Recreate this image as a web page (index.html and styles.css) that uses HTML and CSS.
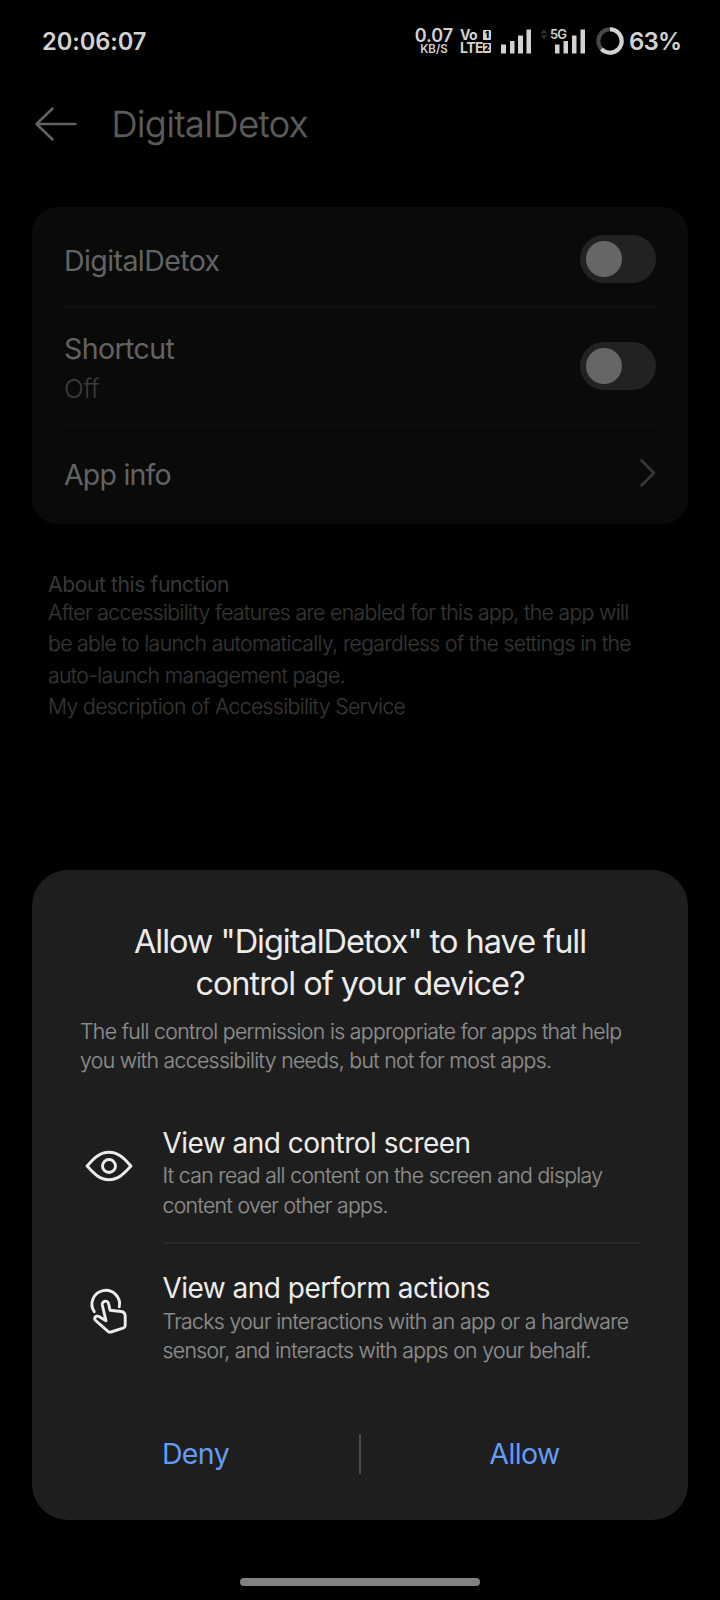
FILE: index.html
```
<!DOCTYPE html>
<html lang="en">
<head>
<meta charset="utf-8">
<title>DigitalDetox</title>
<link rel="stylesheet" href="styles.css">
</head>
<body>
<main class="screen">
  <header class="status">
    <span class="clock">20:06:07</span>
    <div class="indicators">
      <div class="speed"><span class="speed-num">0.07</span><span class="speed-unit">KB/S</span></div>
      <div class="volte">
        <div class="volte-row"><span>Vo</span><b class="sim">1</b></div>
        <div class="volte-row"><span>LTE</span><b class="sim">2</b></div>
      </div>
      <svg class="signal" width="31" height="25" viewBox="0 0 31 25"><path d="M0 15.500h5V24.500H0zM9 12h4.500V24.500H9zM17 6.500h5V24.500h-5zM25.500.5h4.500V24.500h-4.500z"/></svg>
      <div class="signal-5g">
        <svg width="46" height="25" viewBox="0 0 46 25"><path class="faint" d="M4 0l3.500 4.500h-7zM4 10.500L.5 6h7z"/><path d="M15 15.500h4.500V24.500h-4.500zM23.500 12h4.500V24.500h-4.500zM32 6.500h4.500V24.500h-4.500zM40.500.5h4.500V24.500h-4.500z"/></svg>
        <span class="net">5G</span>
      </div>
      <svg class="ring" width="28" height="28" viewBox="0 0 28 28"><circle class="ring-bg" cx="14" cy="14" r="11.700"/><circle class="ring-fg" cx="14" cy="14" r="11.700" pathLength="100" stroke-dasharray="63 37" transform="rotate(-90 14 14)"/></svg>
      <span class="battery">63%</span>
    </div>
  </header>

  <div class="appbar">
    <svg class="back" width="42" height="34" viewBox="0 0 42 34"><path d="M17.500 1.500L1.500 17L17.500 32.500M1.500 17H40.500"/></svg>
    <h1 class="title">DigitalDetox</h1>
  </div>

  <section class="card">
    <div class="row row-main"><span class="label">DigitalDetox</span><span class="toggle"></span></div>
    <div class="row row-shortcut">
      <div class="stack"><span class="label">Shortcut</span><span class="sub">Off</span></div>
      <span class="toggle"></span>
    </div>
    <div class="row row-info"><span class="label">App info</span>
      <svg class="chevron" width="16" height="28" viewBox="0 0 16 28"><path d="M1.500 1.500L14 14L1.500 26.500"/></svg></div>
  </section>

  <section class="about">
    <h2 class="about-title">About this function</h2>
    <p class="about-text">After accessibility features are enabled for this app, the app will<br>be able to launch automatically, regardless of the settings in the<br>auto-launch management page.<br>My description of Accessibility Service</p>
  </section>

  <section class="dialog">
    <h2 class="dialog-title">Allow "DigitalDetox" to have full<br>control of your device?</h2>
    <p class="body-text intro">The full control permission is appropriate for apps that help<br>you with accessibility needs, but not for most apps.</p>
    <div class="perm perm-view">
      <svg class="perm-icon" width="58" height="58" viewBox="0 0 58 58"><path d="M7 29C12 24 18 15.300 29 15.300S46 24 51 29C46 34 40 42.700 29 42.700S12 34 7 29Z"/><circle cx="29" cy="29" r="6.500"/></svg>
      <div class="perm-copy">
        <h3 class="perm-title">View and control screen</h3>
        <p class="body-text">It can read all content on the screen and display<br>content over other apps.</p>
      </div>
    </div>
    <div class="perm perm-act">
      <svg class="perm-icon" width="58" height="58" viewBox="0 0 58 58"><path d="M14.300 29.800A13.800 13.800 0 1 1 39.300 24.800"/><path d="M26 38.800L22.300 23A3.200 3.200 0 0 1 28.600 21.800L30 28.200L41 29.500Q45 30 45.200 34V43.500Q45 45.500 43 46.200L31 50Q29.500 50.500 28 49.300L15.600 38.500C13.500 36 15.500 33.300 18.500 34.300Z"/></svg>
      <div class="perm-copy">
        <h3 class="perm-title">View and perform actions</h3>
        <p class="body-text">Tracks your interactions with an app or a hardware<br>sensor, and interacts with apps on your behalf.</p>
      </div>
    </div>
    <div class="actions"><button class="action">Deny</button><i class="split"></i><button class="action">Allow</button></div>
  </section>
  <div class="homebar"></div>
</main>
</body>
</html>
```
FILE: styles.css
```
* { box-sizing: border-box; margin: 0; padding: 0; }
body { background: #000; font-family: Inter, "Liberation Sans", sans-serif; color: #e8e8e8; }
svg { display: block; flex: none; }
h1, h2, h3 { font-weight: 400; }
.screen { width: 720px; height: 1600px; overflow: hidden; display: flex; flex-direction: column; white-space: nowrap; }

.status { height: 82px; padding: 0 38px 0 42px; display: flex; justify-content: space-between; align-items: center; color: #d2d2d2; font-weight: 600; }
.clock { font-size: 23.700px; line-height: 30px; letter-spacing: -0.1px; padding-top: 1px; }
.indicators { display: flex; align-items: center; }
.speed { display: flex; flex-direction: column; align-items: center; width: 40px; padding-top: 2px; }
.speed-num { font-size: 18px; line-height: 14px; }
.speed-unit { font-size: 11.500px; line-height: 12px; }
.volte { margin-left: 6px; width: 31px; font-size: 14px; line-height: 13px; letter-spacing: -0.5px; font-weight: 700; }
.volte-row { display: flex; justify-content: space-between; align-items: center; }
.sim { background: #d2d2d2; color: #000; font-size: 9px; line-height: 10px; width: 8px; text-align: center; border-radius: 1px; letter-spacing: 0; }
.signal { margin-left: 10px; }
.signal path, .signal-5g path { fill: #d2d2d2; }
.signal-5g { position: relative; margin-left: 8px; }
.signal-5g .faint { fill: #2b2b2b; }
.net { position: absolute; left: 10px; top: -1px; font-size: 13px; line-height: 13px; letter-spacing: -1px; background: #000; }
.ring { margin-left: 10px; }
.ring circle { fill: none; stroke-width: 4; }
.ring-bg { stroke: #484848; }
.ring-fg { stroke: #d2d2d2; }
.battery { margin-left: 5px; width: 53px; font-size: 24px; line-height: 30px; letter-spacing: -0.8px; padding-top: 2px; }

.appbar { height: 84px; padding-left: 35px; display: flex; align-items: center; gap: 34.500px; }
.back path, .chevron path { fill: none; stroke: #626262; stroke-width: 2.500; stroke-linecap: round; stroke-linejoin: round; }
.title { font-size: 36px; line-height: 44px; letter-spacing: -0.35px; color: #5c5c5c; font-weight: 300; -webkit-text-stroke: 0.5px #5c5c5c; }

.card { margin: 41px 32px 0; height: 317px; background: #0a0a0a; border-radius: 26px; padding: 0 32px; color: #636363; }
.row { display: flex; justify-content: space-between; align-items: center; }
.row-main { height: 101px; padding-top: 5px; border-bottom: 2px solid #121212; }
.row-main .label { padding-top: 3px; }
.row-shortcut { height: 118px; border-bottom: 1px solid #101010; }
.row-shortcut .toggle { margin-top: -1px; }
.row-info { height: 98px; }
.row-info .label { letter-spacing: -0.8px; }
.label { font-size: 28.500px; line-height: 36px; letter-spacing: -0.58px; }
.stack { display: flex; flex-direction: column; padding-top: 8px; }
.sub { font-size: 26px; line-height: 44px; letter-spacing: -0.6px; color: #3c3c3c; font-weight: 300; }
.toggle { width: 76px; height: 48px; border-radius: 24px; background: #222; padding: 6px; }
.toggle::before { content: ""; display: block; width: 36px; height: 36px; border-radius: 50%; background: #666; }
.chevron { margin-top: -4px; }
.chevron path { stroke: #383838; }

.about { margin: 47px 48px 0; color: #363636; }
.about-title { font-size: 21.200px; line-height: 26px; letter-spacing: -0.45px; color: #383838; }
.about-text { font-size: 21.200px; line-height: 31.300px; letter-spacing: -0.63px; font-weight: 300; -webkit-text-stroke: 0.2px #363636; }

.dialog { margin: 147.800px 32px 0; height: 650px; background: #1e1e1e; border-radius: 36px; padding: 51px 48px 0; }
.dialog-title { font-size: 32.500px; line-height: 42px; letter-spacing: -1.03px; text-align: center; color: #ececec; }
.body-text { font-size: 21.200px; line-height: 29.500px; letter-spacing: -0.64px; font-weight: 300; color: #8e8e8e; -webkit-text-stroke: 0.2px #8e8e8e; }
.intro { margin-top: 12px; }
.perm { display: flex; align-items: flex-start; gap: 24.500px; }
.perm-view { margin-top: 49px; }
.perm-view .perm-copy { padding-bottom: 21.500px; border-bottom: 2px solid #292929; }
.perm-act { margin-top: 26.500px; }
.perm-icon { margin-top: 12px; }
.perm-icon path, .perm-icon circle { fill: none; stroke: #ececec; stroke-width: 2.900; stroke-linecap: round; stroke-linejoin: round; }
.perm-copy { flex: 1; }
.perm-copy .body-text { padding-top: 0.500px; }
.perm-title { font-size: 28px; line-height: 36px; letter-spacing: -0.52px; color: #ececec; }
.actions { display: flex; align-items: center; margin: 68px -48px 0; }
.action { flex: 1; border: 0; background: none; font: 400 28.500px/40px Inter, sans-serif; letter-spacing: -0.6px; color: #639bf5; }
.split { width: 2px; height: 40px; background: #4a4a4a; }
.homebar { width: 240px; height: 8px; border-radius: 4px; background: #828282; margin: 58px auto 0; }
```
